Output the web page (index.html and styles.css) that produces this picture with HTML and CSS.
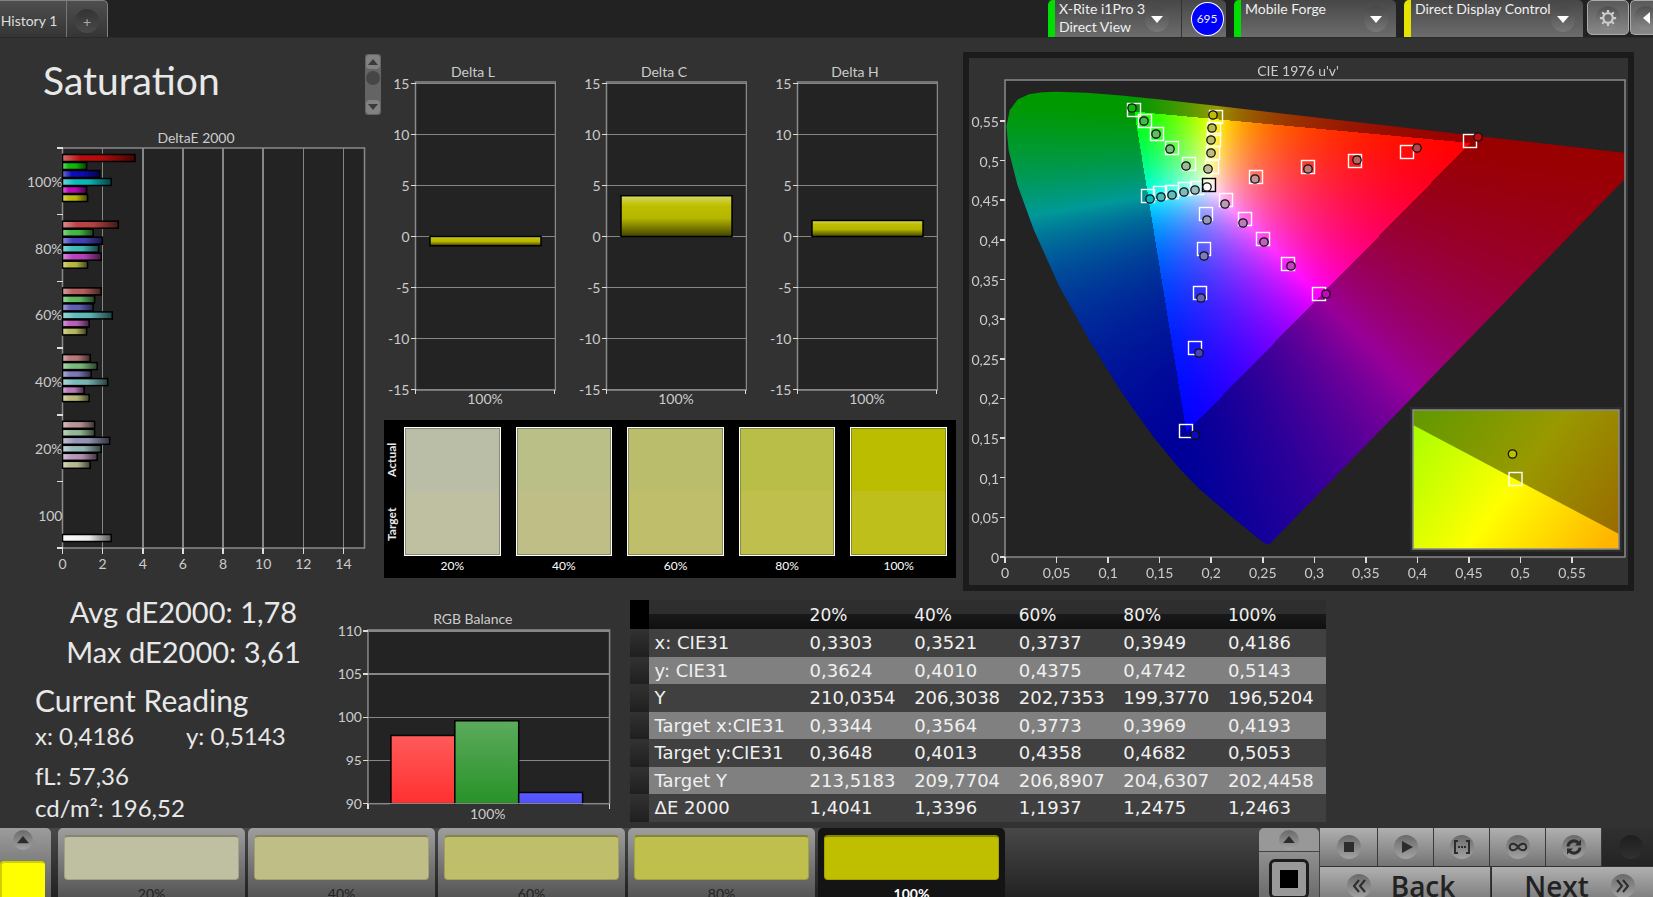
FILE: index.html
```html
<!DOCTYPE html>
<html lang="en">
  <head>
    <meta charset="UTF-8" />
    <meta name="viewport" content="width=device-width, initial-scale=1.0" />
    <title>Saturation</title>
    <link rel="stylesheet" href="styles.css">
  </head>
  <body>
    <!-- Top bar -->
    <header class="topbar">
      <div class="tabs">
        <button class="tab">History 1</button>
        <button class="tab-add" aria-label="Add history"><span class="knob">+</span></button>
      </div>
      <div class="devices">
        <div class="device meter">
          <button class="device-menu">
            <span class="device-name">X-Rite i1Pro 3<br>Direct View</span>
            <span class="drop"><svg viewBox="0 0 12 8"><path d="M0 1h12L6 8z"/></svg></span>
          </button>
          <span class="count"><span>695</span></span>
        </div>
        <button class="device source">
          <span class="device-name">Mobile Forge</span>
          <span class="drop"><svg viewBox="0 0 12 8"><path d="M0 1h12L6 8z"/></svg></span>
        </button>
        <button class="device display">
          <span class="device-name">Direct Display Control</span>
          <span class="drop"><svg viewBox="0 0 12 8"><path d="M0 1h12L6 8z"/></svg></span>
        </button>
        <button class="tool" aria-label="Settings">
          <span class="knob">
            <svg class="gear" viewBox="0 0 20 20">
              <circle cx="10" cy="10" r="5.3"/>
              <path d="M10 1v3M10 16v3M1 10h3M16 10h3M3.6 3.6l2.2 2.2M14.2 14.2l2.2 2.2M16.4 3.6l-2.2 2.2M5.8 14.2l-2.2 2.2"/>
            </svg>
          </span>
        </button>
        <button class="tool tool-back" aria-label="Collapse">
          <span class="knob"><svg class="arrow" viewBox="0 0 8 12"><path d="M8 0v12L1 6z"/></svg></span>
        </button>
      </div>
    </header>

    <main>
      <section class="top">
        <div class="col-left">
          <div class="heading">
            <h1>Saturation</h1>
            <div class="scroller">
              <button aria-label="Up"><svg viewBox="0 0 10 6"><path d="M0 6h10L5 0z"/></svg></button>
              <span class="thumb"></span>
              <button aria-label="Down"><svg viewBox="0 0 10 6"><path d="M0 0h10L5 6z"/></svg></button>
            </div>
          </div>
          <svg class="chart" id="deltaE" viewBox="0 0 384 450"></svg>
        </div>

        <div class="col-mid">
          <div class="deltas">
            <svg class="chart" id="deltaL" viewBox="0 0 168 350"></svg>
            <svg class="chart" id="deltaC" viewBox="0 0 168 350"></svg>
            <svg class="chart" id="deltaH" viewBox="0 0 168 350"></svg>
          </div>
          <div class="swatches">
            <div class="sides"><span>Actual</span><span>Target</span></div>
            <figure><div class="sw s20"></div><figcaption>20%</figcaption></figure>
            <figure><div class="sw s40"></div><figcaption>40%</figcaption></figure>
            <figure><div class="sw s60"></div><figcaption>60%</figcaption></figure>
            <figure><div class="sw s80"></div><figcaption>80%</figcaption></figure>
            <figure><div class="sw s100"></div><figcaption>100%</figcaption></figure>
          </div>
        </div>

        <div class="col-right">
          <div class="cie">
            <svg class="chart" id="cie" viewBox="0 0 659 527">
              <foreignObject x="36" y="22" width="620" height="477">
                <canvas id="locus" width="620" height="477"></canvas>
              </foreignObject>
            </svg>
          </div>
        </div>
      </section>

      <section class="bottom">
        <div class="readings">
          <p class="stat">Avg dE2000: 1,78</p>
          <p class="stat">Max dE2000: 3,61</p>
          <h2>Current Reading</h2>
          <p class="xy"><span>x: 0,4186</span><span>y: 0,5143</span></p>
          <p class="lum">fL: 57,36</p>
          <p>cd/m²: 196,52</p>
        </div>

        <svg class="chart" id="rgb" viewBox="0 0 274 218"></svg>

        <div class="data">
          <table>
            <thead>
              <tr><td class="grip"></td><th></th><th>20%</th><th>40%</th><th>60%</th><th>80%</th><th>100%</th></tr>
            </thead>
            <tbody>
              <tr><td class="grip"></td><th>x: CIE31</th><td>0,3303</td><td>0,3521</td><td>0,3737</td><td>0,3949</td><td>0,4186</td></tr>
              <tr><td class="grip"></td><th>y: CIE31</th><td>0,3624</td><td>0,4010</td><td>0,4375</td><td>0,4742</td><td>0,5143</td></tr>
              <tr><td class="grip"></td><th>Y</th><td>210,0354</td><td>206,3038</td><td>202,7353</td><td>199,3770</td><td>196,5204</td></tr>
              <tr><td class="grip"></td><th>Target x:CIE31</th><td>0,3344</td><td>0,3564</td><td>0,3773</td><td>0,3969</td><td>0,4193</td></tr>
              <tr><td class="grip"></td><th>Target y:CIE31</th><td>0,3648</td><td>0,4013</td><td>0,4358</td><td>0,4682</td><td>0,5053</td></tr>
              <tr><td class="grip"></td><th>Target Y</th><td>213,5183</td><td>209,7704</td><td>206,8907</td><td>204,6307</td><td>202,4458</td></tr>
              <tr><td class="grip"></td><th>ΔE 2000</th><td>1,4041</td><td>1,3396</td><td>1,1937</td><td>1,2475</td><td>1,2463</td></tr>
            </tbody>
          </table>
        </div>
      </section>
    </main>

    <!-- Pattern strip and transport -->
    <footer>
      <div class="current">
        <button class="knob" aria-label="Expand"><svg viewBox="0 0 10 6"><path d="M0 6h10L5 0z"/></svg></button>
        <div class="current-color"></div>
      </div>
      <div class="strip">
        <button class="tile"><span class="chip c20"></span>20%</button>
        <button class="tile"><span class="chip c40"></span>40%</button>
        <button class="tile"><span class="chip c60"></span>60%</button>
        <button class="tile"><span class="chip c80"></span>80%</button>
        <button class="tile selected"><span class="chip c100"></span>100%</button>
      </div>
      <div class="window">
        <button class="window-up" aria-label="Window size"><span class="knob"><svg viewBox="0 0 10 6"><path d="M0 6h10L5 0z"/></svg></span></button>
        <button class="window-pick" aria-label="Window pattern"><span class="frame"><span></span></span></button>
      </div>
      <div class="transport">
        <div class="keys">
          <button aria-label="Stop"><span class="knob"><svg viewBox="0 0 20 20"><path d="M5 5h10v10H5z"/></svg></span></button>
          <button aria-label="Play"><span class="knob"><svg viewBox="0 0 20 20"><path d="M6 4l11 6-11 6z"/></svg></span></button>
          <button aria-label="Range"><span class="knob"><svg class="line" viewBox="0 0 20 20"><path d="M6 4H3v12h3M14 4h3v12h-3"/><path class="dots" d="M6 10h2M9 10h2M12 10h2"/></svg></span></button>
          <button aria-label="Loop"><span class="knob"><svg class="line" viewBox="0 0 20 20"><path d="M10 10C8 7 6.500 6.700 5 6.700a3.300 3.300 0 0 0 0 6.600C6.500 13.300 8 13 10 10s3.500-3.300 5-3.300a3.300 3.300 0 0 1 0 6.600c-1.500 0-3-.3-5-3.300z"/></svg></span></button>
          <button aria-label="Refresh"><span class="knob"><svg class="line thick" viewBox="0 0 20 20"><path d="M4 9.500A6 6 0 0 1 14.500 6M16 10.500A6 6 0 0 1 5.500 14"/><path class="fill" d="M17 2.500v6h-6zM3 17.500v-6h6z"/></svg></span></button>
          <button class="off" aria-label="Record"><span class="knob"></span></button>
        </div>
        <div class="nav">
          <button class="back"><span class="knob"><svg class="line" viewBox="0 0 20 20"><path d="M10 4l-5 6 5 6M16 4l-5 6 5 6"/></svg></span>Back</button>
          <button>Next<span class="knob"><svg class="line" viewBox="0 0 20 20"><path d="M4 4l5 6-5 6M10 4l5 6-5 6"/></svg></span></button>
        </div>
      </div>
    </footer>

    <script src="charts.js"></script>
  </body>
</html>
```

FILE: styles.css
```css
* {
  box-sizing: border-box;
}

body {
  font-family: Lato, "Noto Sans", sans-serif;
  font-size: 14px;
  background: #323232;
  color: #e8e8e8;
  margin: 0;
  height: 100vh;
  display: flex;
  flex-direction: column;
  overflow: hidden;
}

h1, h2, p, figure {
  margin: 0;
  font-weight: normal;
}

button {
  font: inherit;
  color: inherit;
  border: none;
  margin: 0;
  padding: 0;
  background: none;
  cursor: pointer;
}

.knob {
  display: flex;
  align-items: center;
  justify-content: center;
  width: 24px;
  height: 24px;
  border-radius: 50%;
  background: linear-gradient(#6a6a6a, #a2a2a2);
  flex: none;
}

/* Top bar */
.topbar {
  height: 38px;
  flex: none;
  display: flex;
  justify-content: space-between;
  background: #222;
  border-bottom: 1px solid #2a2a2a;
}

.tabs {
  display: flex;
  height: 37px;
  background: linear-gradient(#4e4e4e, #353535);
  border: 1px solid #808080;
  border-width: 1px 1px 0 0;
  border-radius: 0 5px 0 0;
}

.tab {
  width: 67px;
  padding-right: 8px;
  padding-top: 2px;
  border-right: 1px solid #777;
  color: #ddd;
  white-space: nowrap;
}

.tab-add {
  width: 40px;
  display: flex;
  align-items: center;
  justify-content: center;
  padding-top: 4px;
}

.tab-add .knob {
  background: linear-gradient(#333, #4a4a4a);
  color: #aaa;
}

.devices {
  display: flex;
  height: 37px;
  gap: 8px;
}

.device {
  display: flex;
  background: linear-gradient(#474747, #6c6c6c);
  border-left: 7px solid #0d0;
  border-radius: 5px 5px 0 0;
  color: #f0f0f0;
  text-align: left;
}

.meter {
  width: 178px;
}

.source {
  width: 162px;
}

.display {
  width: 179px;
  border-left-color: #e4e400;
}

.device-menu {
  display: flex;
  flex: 1;
  text-align: left;
  border-right: 1px solid #333;
}

.device-name {
  flex: 1;
  padding-left: 4px;
  line-height: 18px;
  white-space: nowrap;
}

.drop {
  width: 24px;
  height: 26px;
  margin: 6px 8px 0 0;
  border-radius: 50%;
  background: linear-gradient(#484848, #777);
  display: flex;
  align-items: center;
  justify-content: center;
  flex: none;
}

.meter .drop {
  margin-right: 12px;
}

.drop svg {
  width: 12px;
  height: 8px;
  fill: #fff;
}

.count {
  width: 44px;
  padding-left: 6px;
  display: flex;
  align-items: center;
  justify-content: center;
}

.count span {
  width: 33px;
  height: 34px;
  border: 1px solid #fff;
  border-radius: 50%;
  background: #00f;
  font-size: 12px;
  line-height: 32px;
  text-align: center;
}

.tool {
  width: 42px;
  height: 35px;
  margin-left: -4px;
  border: 1px solid #aaa;
  border-radius: 5px;
  background: linear-gradient(#5a5a5a, #888);
  display: flex;
  align-items: center;
  justify-content: center;
}

.tool .knob {
  background: linear-gradient(#505050, #8a8a8a);
}

.tool-back {
  width: 23px;
  margin-left: -7px;
  border-right: none;
  border-radius: 5px 0 0 5px;
  justify-content: flex-start;
  padding-left: 3px;
  overflow: hidden;
}

.gear {
  width: 18px;
  fill: none;
  stroke: #ccc;
  stroke-width: 2.500;
}

.arrow {
  width: 8px;
  fill: #fff;
}

/* Main */
main {
  flex: 1;
  min-height: 0;
}

.chart {
  display: block;
  width: 100%;
  height: auto;
}

.chart text {
  font-size: 14px;
  fill: #ccc;
}

.top {
  display: grid;
  grid-template-columns: 384fr 572fr 678fr;
  padding: 14px 19px 0 0;
}

.heading {
  display: flex;
  justify-content: space-between;
  padding: 2px 3px 0 43px;
  height: 76px;
}

h1 {
  font-size: 39px;
  line-height: 52px;
}

.scroller {
  width: 16px;
  height: 61px;
  background: #646464;
  border-radius: 3px;
  display: flex;
  flex-direction: column;
  align-items: center;
  padding: 1px;
}

.scroller button {
  width: 14px;
  height: 14px;
  border-radius: 4px;
  background: #828282;
  display: flex;
  align-items: center;
  justify-content: center;
}

.scroller button:last-child {
  margin-top: auto;
}

.scroller svg {
  width: 10px;
  fill: #3a3a3a;
}

.thumb {
  width: 14px;
  height: 14px;
  margin-top: 2px;
  border-radius: 50%;
  background: #464646;
}

.deltas {
  display: grid;
  grid-template-columns: repeat(3, 1fr);
  gap: 23px;
  padding: 10px 18px 8px 4px;
}

.swatches {
  display: grid;
  grid-template-columns: 5px repeat(5, 1fr);
  gap: 15px;
  background: #000;
  height: 158px;
  padding: 7px 9px 0 0;
}

.sides {
  display: flex;
  flex-direction: row-reverse;
  justify-content: space-around;
  align-items: center;
  height: 129px;
  writing-mode: vertical-rl;
  transform: rotate(180deg);
  width: 16px;
  font-size: 12px;
  font-weight: bold;
  line-height: 16px;
}

.sw {
  height: 129px;
  border: 1px solid #fff;
  outline: 1px solid rgba(60, 60, 60, 0.4);
  outline-offset: -2px;
}

figcaption {
  font-size: 12px;
  line-height: 20px;
  text-align: center;
  color: #fff;
}

.s20 { background: linear-gradient(#bbbea6 50%, #bfbfa2 50%); }
.s40 { background: linear-gradient(#babf88 50%, #bfbe86 50%); }
.s60 { background: linear-gradient(#babe6c 50%, #bebe6b 50%); }
.s80 { background: linear-gradient(#b9be48 50%, #bebf4c 50%); }
.s100 { background: linear-gradient(#bbbe00 50%, #bfbf1b 50%); }

.col-right {
  padding-left: 7px;
}

.cie {
  border: 6px solid #1b1b1b;
}

canvas {
  display: block;
}

/* Bottom row */
.bottom {
  display: grid;
  grid-template-columns: 335fr 274fr 717fr 327fr;
  align-items: start;
  padding-top: 9px;
}

#rgb {
  margin-top: 8px;
}

.readings {
  padding-left: 35px;
  font-size: 24px;
  line-height: 32px;
  white-space: nowrap;
}

.stat {
  font-size: 29px;
  line-height: 40px;
  padding-right: 5px;
  text-align: center;
  margin-top: -8px;
  margin-bottom: 8px;
}

h2 {
  font-size: 30px;
  line-height: 40px;
  margin-top: 2px;
}

.xy {
  display: flex;
}

.xy span {
  width: 151px;
}

.lum {
  margin-top: 8px;
}

.data {
  padding-left: 19px;
}

table {
  width: 100%;
  table-layout: fixed;
  border-collapse: collapse;
  font-family: "DejaVu Sans", sans-serif;
  font-size: 18px;
  line-height: 20px;
  color: #f0f0f0;
}

th, td {
  padding: 0 0 0 6px;
  font-weight: normal;
  text-align: left;
  white-space: nowrap;
}

tbody tr {
  height: 28px;
  background: #404040;
}

tbody tr:nth-child(even) {
  height: 27px;
  background: #808080;
}

thead tr {
  height: 29px;
  background: linear-gradient(#2e2e2e 48%, #191919 50%, #101010);
}

thead th {
  font-size: 17px;
}

th:nth-child(2) {
  width: 155px;
}

td.grip {
  width: 19px;
  background: linear-gradient(#323232, #1f1f1f);
}

thead td.grip {
  background: #000;
}

/* Footer */
footer {
  height: 69px;
  flex: none;
  display: flex;
  overflow: hidden;
  background: linear-gradient(#484848, #222);
  color: #222;
}

footer svg {
  fill: #2c2c2c;
}

.current {
  width: 51px;
  margin-right: 7px;
  border-radius: 0 5px 0 0;
  background: linear-gradient(#9c9c9c, #606060);
}

.current .knob {
  width: 20px;
  height: 20px;
  margin: 2px 0 0 13px;
}

.current svg, .window svg {
  width: 12px;
}

.current-color {
  width: 45px;
  height: 50px;
  margin-top: 11px;
  border: 2px solid #d0d000;
  border-width: 2px 0 0 2px;
  border-radius: 4px;
  background: #ff0;
}

.strip {
  flex: 1;
  display: flex;
  gap: 3px;
}

.tile {
  flex: 0 1 187px;
  height: 90px;
  padding: 7px 6px 0;
  border-radius: 5px 5px 0 0;
  background: linear-gradient(#9e9e9e, #555 76%);
  display: flex;
  flex-direction: column;
  line-height: 18px;
  align-items: center;
}

.chip {
  align-self: stretch;
  height: 45px;
  margin-bottom: 5px;
  border-radius: 4px;
  border: 1px solid rgba(0, 0, 0, 0.15);
  border-top: 2px solid rgba(0, 0, 0, 0.3);
}

.selected {
  background: #141414;
  color: #fff;
  font-weight: bold;
}

.c20 { background: #bfbfa2; }
.c40 { background: #bfbe86; }
.c60 { background: #bebe6b; }
.c80 { background: #bebf4c; }
.c100 { background: #bfbf00; }

.window {
  width: 61px;
  border-right: 1px solid #444;
}

.window button {
  display: flex;
  justify-content: center;
  width: 100%;
}

.window-up {
  height: 24px;
  align-items: center;
  border-radius: 5px 5px 0 0;
  background: #989898;
  border-bottom: 1px solid #444;
}

.window-up .knob {
  width: 20px;
  height: 20px;
}

.window-pick {
  height: 60px;
  padding-top: 7px;
  background: linear-gradient(#909090, #606060);
}

.frame {
  width: 40px;
  height: 40px;
  padding: 8px;
  border: 3px solid #1c1c1c;
  border-radius: 6px;
  background: #999;
}

.frame span {
  display: block;
  width: 18px;
  height: 18px;
  background: #000;
}

.transport {
  width: 333px;
}

.keys {
  display: grid;
  grid-template-columns: 58px repeat(4, 56px) 58px;
  gap: 0;
  height: 38px;
}

.keys button, .nav button {
  display: flex;
  align-items: center;
  justify-content: center;
  background: linear-gradient(#b0b0b0, #747474);
  border-right: 1px solid #3a3a3a;
}

.keys svg {
  width: 20px;
}

.keys .off {
  background: linear-gradient(#303030, #242424);
}

.off .knob {
  background: linear-gradient(#1e1e1e, #303030);
}

footer .line {
  width: 20px;
  fill: none;
  stroke: #2c2c2c;
  stroke-width: 2;
}

footer .thick {
  stroke-width: 3;
}

.line .fill {
  fill: #2c2c2c;
  stroke: none;
}

.nav {
  display: grid;
  grid-template-columns: 171px 170px;
  gap: 1px;
  margin-top: 1px;
  font-family: "Open Sans", sans-serif;
  font-size: 28px;
  font-weight: 600;
  line-height: 38px;
}

.nav button {
  height: 38px;
  gap: 22px;
  padding-left: 6px;
}

.nav .back {
  gap: 20px;
  padding: 0 8px 0 0;
}
```

FILE: charts.js
```js
const NS = 'http://www.w3.org/2000/svg';

function add(parent, tag, attrs, text) {
  const node = document.createElementNS(NS, tag);
  for (const key in attrs) node.setAttribute(key, attrs[key]);
  if (text !== undefined) node.textContent = text;
  parent.appendChild(node);
  return node;
}

function line(svg, x1, y1, x2, y2, color) {
  add(svg, 'path', {
    d: `M${x1} ${y1}L${x2} ${y2}`,
    stroke: color || '#868686',
    'stroke-width': 1.5,
    'shape-rendering': 'crispEdges'
  });
}

function label(svg, x, y, text, anchor) {
  add(svg, 'text', { x, y, 'text-anchor': anchor || 'middle' }, text);
}

function frame(svg, x, y, width, height, fill) {
  add(svg, 'rect', { x, y, width, height, fill: fill || '#232323', stroke: '#8a8a8a', 'stroke-width': 1.5 });
}

let gradients = 0;

// glossy fill: light edge, plain colour, dark edge
function gloss(svg, color, vertical) {
  const id = 'g' + gradients++;
  const grad = add(svg, 'linearGradient', vertical ? { id, x1: 0, y1: 0, x2: 0, y2: 1 } : { id });
  const [r, g, b] = color;
  const mix = (to, t) => `rgb(${[r, g, b].map((c) => Math.round(c + (to - c) * t)).join()})`;
  add(grad, 'stop', { offset: 0, 'stop-color': mix(255, 0.4) });
  add(grad, 'stop', { offset: 0.25, 'stop-color': mix(0, 0) });
  add(grad, 'stop', { offset: 0.55, 'stop-color': mix(0, 0.05) });
  add(grad, 'stop', { offset: 1, 'stop-color': mix(0, 0.65) });
  return `url(#${id})`;
}

function bar(svg, x, y, width, height, fill) {
  add(svg, 'rect', { x, y, width, height, fill, stroke: '#000', 'stroke-width': 1.5 });
}

// order of the bars: red, green, blue, cyan, magenta, yellow
const HUES = [[1, 0, 0], [0, 1, 0], [0, 0, 1], [0, 1, 1], [1, 0, 1], [1, 1, 0]];
const LOW = { 100: 12, 80: 68, 60: 98, 40: 124, 20: 152 };

function tone(hue, level) {
  return HUES[hue].map((on) => (on ? 188 : LOW[level]));
}

function drawDeltaE() {
  const svg = document.getElementById('deltaE');
  const groups = [
    [100, 3.61, 1.2, 1.85, 2.43, 1.2, 1.25],
    [80, 2.78, 1.53, 1.98, 1.8, 1.93, 1.25],
    [60, 1.93, 1.6, 1.53, 2.48, 1.33, 1.2],
    [40, 1.38, 1.73, 1.43, 2.25, 1.08, 1.33],
    [20, 1.6, 1.6, 2.35, 1.93, 1.73, 1.38]
  ];
  const left = 62.5, top = 20, unit = 20.07, step = 66.7;
  label(svg, 196, 15, 'DeltaE 2000');
  frame(svg, left, top, 302, 400);
  for (let v = 0; v <= 14; v += 2) {
    const x = left + v * unit;
    if (v) line(svg, x, top, x, top + 400);
    line(svg, x, top + 400, x, top + 406, '#ddd');
    label(svg, x, top + 421, v);
  }
  for (let i = 0; i <= 6; i++) {
    line(svg, left - 6, top + i * step, left, top + i * step, '#ddd');
  }
  groups.forEach(([level, ...values], i) => {
    label(svg, left, top + i * step + 39, level + '%', 'end');
    values.forEach((value, j) => {
      bar(svg, left, top + i * step + 6.5 + j * 8, value * unit, 7, gloss(svg, tone(j, level)));
    });
  });
  label(svg, left, top + 5 * step + 39, '100', 'end');
  bar(svg, left, top + 5 * step + 53, 2.43 * unit, 7, gloss(svg, [245, 245, 245]));
}

function drawDelta(id, title, value) {
  const svg = document.getElementById(id);
  const left = 27.5, zero = 174.5, unit = 10.2;
  label(svg, 85, 15, title);
  frame(svg, left, 20, 140, 308);
  for (let v = -15; v <= 15; v += 5) {
    const y = zero - v * unit;
    line(svg, left, y, left + 140, y);
    line(svg, left - 5, y, left, y, '#ddd');
    label(svg, left - 6, y + 5, v, 'end');
  }
  line(svg, left, 328, left, 332, '#ddd');
  line(svg, left + 139, 328, left + 139, 332, '#ddd');
  bar(svg, 42, Math.min(zero, zero - value * unit), 111, Math.abs(value) * unit, gloss(svg, [190, 190, 0], true));
  label(svg, 97, 342, '100%');
}

function drawRgb() {
  const svg = document.getElementById('rgb');
  const left = 31, bottom = 196, unit = 8.65;
  label(svg, 136, 16, 'RGB Balance');
  frame(svg, left, 22, 242, 174);
  for (let v = 90; v <= 110; v += 5) {
    const y = bottom - (v - 90) * unit;
    line(svg, left, y, left + 242, y);
    line(svg, left - 5, y, left, y, '#ddd');
    label(svg, left - 6, y + 5, v, 'end');
  }
  const bars = [[97.9, '#ff5a5a', '#ff3030'], [99.6, '#5cab5c', '#289228'], [91.3, '#5a5aff', '#5050ff']];
  bars.forEach(([value, from, to], i) => {
    const grad = add(svg, 'linearGradient', { id: 'rgb' + i, x1: 0, y1: 0, x2: 0, y2: 1 });
    add(grad, 'stop', { offset: 0, 'stop-color': from });
    add(grad, 'stop', { offset: 1, 'stop-color': to });
    const h = (value - 90) * unit;
    bar(svg, 54 + i * 64, bottom - h, 64, h, `url(#rgb${i})`);
  });
  line(svg, left, bottom, left + 242, bottom);
  line(svg, left, bottom, left, bottom + 5, '#ddd');
  line(svg, left + 242, bottom, left + 242, bottom + 5, '#ddd');
  label(svg, 151, 211, '100%');
}

// spectral locus in u', v'
const LOCUS = [
  [0.2568, 0.0165], [0.2522, 0.0169], [0.2461, 0.0226], [0.2347, 0.035], [0.2161, 0.0549],
  [0.1877, 0.0871], [0.169, 0.1119], [0.1441, 0.151], [0.1147, 0.2044], [0.0828, 0.2708],
  [0.0521, 0.3427], [0.0282, 0.4117], [0.0119, 0.4698], [0.0035, 0.5131], [0.0014, 0.5432],
  [0.0046, 0.5638], [0.0123, 0.577], [0.0231, 0.5837], [0.036, 0.5861], [0.0501, 0.5868],
  [0.0792, 0.5856], [0.1127, 0.5821], [0.1531, 0.5766], [0.2026, 0.5694], [0.2623, 0.5604],
  [0.3315, 0.5501], [0.4035, 0.5393], [0.4692, 0.5296], [0.5203, 0.5219], [0.583, 0.5125],
  [0.6234, 0.5065]
];
const UX = 1031, VY = 792.8, PLOT_H = 477;

function drawLocus() {
  const canvas = document.getElementById('locus');
  const { width, height } = canvas;
  const layer = document.createElement('canvas');
  layer.width = width;
  layer.height = height;
  const lctx = layer.getContext('2d');
  const img = lctx.createImageData(width, height);
  for (let py = 0; py < height; py++) {
    for (let px = 0; px < width; px++) {
      const u = px / UX;
      const v = Math.max((height - py) / VY, 0.001);
      const X = (9 * u) / (4 * v);
      const Z = (12 - 3 * u - 20 * v) / (4 * v);
      const rgb = [
        3.2406 * X - 1.5372 - 0.4986 * Z,
        -0.9689 * X + 1.8758 + 0.0415 * Z,
        0.0557 * X - 0.204 + 1.057 * Z
      ];
      const dim = Math.min(...rgb) < 0 ? 0.6 : 1;
      const max = Math.max(...rgb);
      const at = (py * width + px) * 4;
      rgb.forEach((c, i) => {
        img.data[at + i] = 255 * dim * Math.pow(Math.max(c, 0) / max, 1.1);
      });
      img.data[at + 3] = 255;
    }
  }
  lctx.putImageData(img, 0, 0);

  const ctx = canvas.getContext('2d');
  ctx.beginPath();
  LOCUS.forEach(([u, v]) => ctx.lineTo(u * UX, height - v * VY));
  ctx.closePath();
  ctx.clip();
  ctx.drawImage(layer, 0, 0);
}

// target and measured points per hue, 100% first, in plot pixels
const POINTS = [
  { hue: 0, target: [[465, 61], [402, 72], [350, 81], [303, 87], [251, 97]], actual: [[473, 57], [412, 68], [352, 80], [303, 89], [250, 99]] },
  { hue: 1, target: [[129, 30], [140, 41], [152, 54], [167, 68], [184, 84]], actual: [[127, 28], [139, 41], [151, 54], [165, 69], [181, 86]] },
  { hue: 2, target: [[181, 351], [190, 268], [195, 213], [199, 169], [201, 134]], actual: [[190, 355], [194, 273], [196, 218], [199, 176], [202, 140]] },
  { hue: 3, target: [[143, 116], [155, 113], [167, 112], [180, 109], [192, 108]], actual: [[145, 119], [156, 117], [167, 115], [179, 112], [190, 110]] },
  { hue: 4, target: [[314, 214], [283, 184], [258, 159], [240, 139], [221, 120]], actual: [[321, 214], [286, 186], [259, 162], [238, 143], [220, 124]] },
  { hue: 5, target: [[211, 37], [209, 49], [209, 60], [208, 73], [207, 87]], actual: [[208, 35], [207, 48], [206, 60], [206, 73], [203, 89]] }
];

function square(svg, x, y, color) {
  add(svg, 'rect', { x: x - 6.5, y: y - 6.5, width: 13, height: 13, fill: 'none', stroke: color, 'stroke-width': 1.4 });
}

function dot(svg, x, y, fill) {
  add(svg, 'circle', { cx: x, cy: y, r: 4.2, fill, stroke: '#111', 'stroke-width': 1.3 });
}

function drawCie() {
  const svg = document.getElementById('cie');
  const plot = svg.querySelector('foreignObject');
  const left = 36, top = 22, bottom = top + PLOT_H;
  const bg = add(svg, 'rect', { x: left, y: top, width: 620, height: PLOT_H, fill: '#232323' });
  svg.insertBefore(bg, plot);
  frame(svg, left, top, 620, PLOT_H, 'none');
  label(svg, 329, 18, "CIE 1976 u'v'");
  for (let i = 0; i <= 11; i++) {
    const text = String(i * 5 / 100).replace('.', ',');
    const x = left + i * 51.55;
    const y = bottom - i * 39.64;
    line(svg, x, bottom, x, bottom + 6, '#ddd');
    label(svg, x, bottom + 21, text);
    line(svg, left - 5, y, left, y, '#ddd');
    label(svg, left - 6, y + 6, text, 'end');
  }

  const marks = add(svg, 'g', { transform: `translate(${left} ${top})` });
  POINTS.forEach((p) => p.target.forEach(([x, y]) => square(marks, x, y, '#fff')));
  POINTS.forEach((p) => p.actual.forEach(([x, y], i) => dot(marks, x, y, `rgb(${tone(p.hue, 100 - i * 20)})`)));
  square(marks, 204, 105, '#000');
  dot(marks, 202, 107, '#fff');

  // magnified view of the selected point
  const grad = add(svg, 'linearGradient', { id: 'zoom', gradientUnits: 'userSpaceOnUse', x1: 456, y1: 356, x2: 638, y2: 488 });
  add(grad, 'stop', { offset: 0, 'stop-color': '#aaff00' });
  add(grad, 'stop', { offset: 0.5, 'stop-color': '#ffff00' });
  add(grad, 'stop', { offset: 1, 'stop-color': '#ffb400' });
  add(svg, 'rect', { x: 441, y: 349, width: 212, height: 145, fill: '#2d2d2d' });
  add(svg, 'rect', { x: 444, y: 352, width: 206, height: 139, fill: 'url(#zoom)' });
  add(svg, 'path', { d: 'M444 352h206v124L444 367z', fill: '#000', 'fill-opacity': 0.4 });
  frame(svg, 444, 352, 206, 139, 'none');
  square(svg, 546.5, 421, '#fff');
  dot(svg, 543.5, 396, '#bebe00');
}

drawDeltaE();
drawDelta('deltaL', 'Delta L', -0.9);
drawDelta('deltaC', 'Delta C', 4);
drawDelta('deltaH', 'Delta H', 1.57);
drawRgb();
drawLocus();
drawCie();
```
